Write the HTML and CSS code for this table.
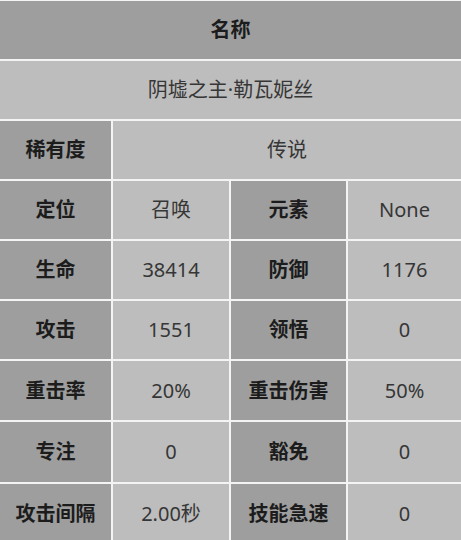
FILE: index.html
```html
<!DOCTYPE html>
<html lang="zh">
<head>
<meta charset="utf-8">
<link rel="stylesheet" href="styles.css">
</head>
<body>
<div class="sheet">
  <div class="cell head full">名称</div>
  <div class="cell val full">阴墟之主·勒瓦妮丝</div>

  <div class="cell head">稀有度</div>
  <div class="cell val span3">传说</div>

  <div class="cell head">定位</div>
  <div class="cell val">召唤</div>
  <div class="cell head">元素</div>
  <div class="cell val">None</div>

  <div class="cell head">生命</div>
  <div class="cell val">38414</div>
  <div class="cell head">防御</div>
  <div class="cell val">1176</div>

  <div class="cell head">攻击</div>
  <div class="cell val">1551</div>
  <div class="cell head">领悟</div>
  <div class="cell val">0</div>

  <div class="cell head">重击率</div>
  <div class="cell val">20%</div>
  <div class="cell head">重击伤害</div>
  <div class="cell val">50%</div>

  <div class="cell head">专注</div>
  <div class="cell val">0</div>
  <div class="cell head">豁免</div>
  <div class="cell val">0</div>

  <div class="cell head">攻击间隔</div>
  <div class="cell val">2.00秒</div>
  <div class="cell head">技能急速</div>
  <div class="cell val">0</div>
</div>
</body>
</html>
```

FILE: styles.css
```css
html, body {
  margin: 0;
  padding: 0;
  background: #f4f4f4;
}

body {
  width: 461px;
  height: 540px;
  overflow: hidden;
  font-family: "Noto Sans", "Noto Sans CJK SC", sans-serif;
}

.sheet {
  display: grid;
  grid-template-columns: 111px 116px 115px 1fr;
  grid-template-rows: 58px 58px 58px 58px 58px 58px 59px 60px 60px;
  gap: 2px;
  padding-top: 1px;
  background: #f4f4f4;
}

.cell {
  display: flex;
  align-items: center;
  justify-content: center;
  font-size: 20px;
  line-height: 1;
}

.head {
  background: #9e9e9e;
  color: #1c1c1c;
  font-weight: 700;
}

.val {
  background: #bdbdbd;
  color: #363636;
  font-weight: 400;
}

.full {
  grid-column: 1 / -1;
}

.span3 {
  grid-column: 2 / -1;
}
```
